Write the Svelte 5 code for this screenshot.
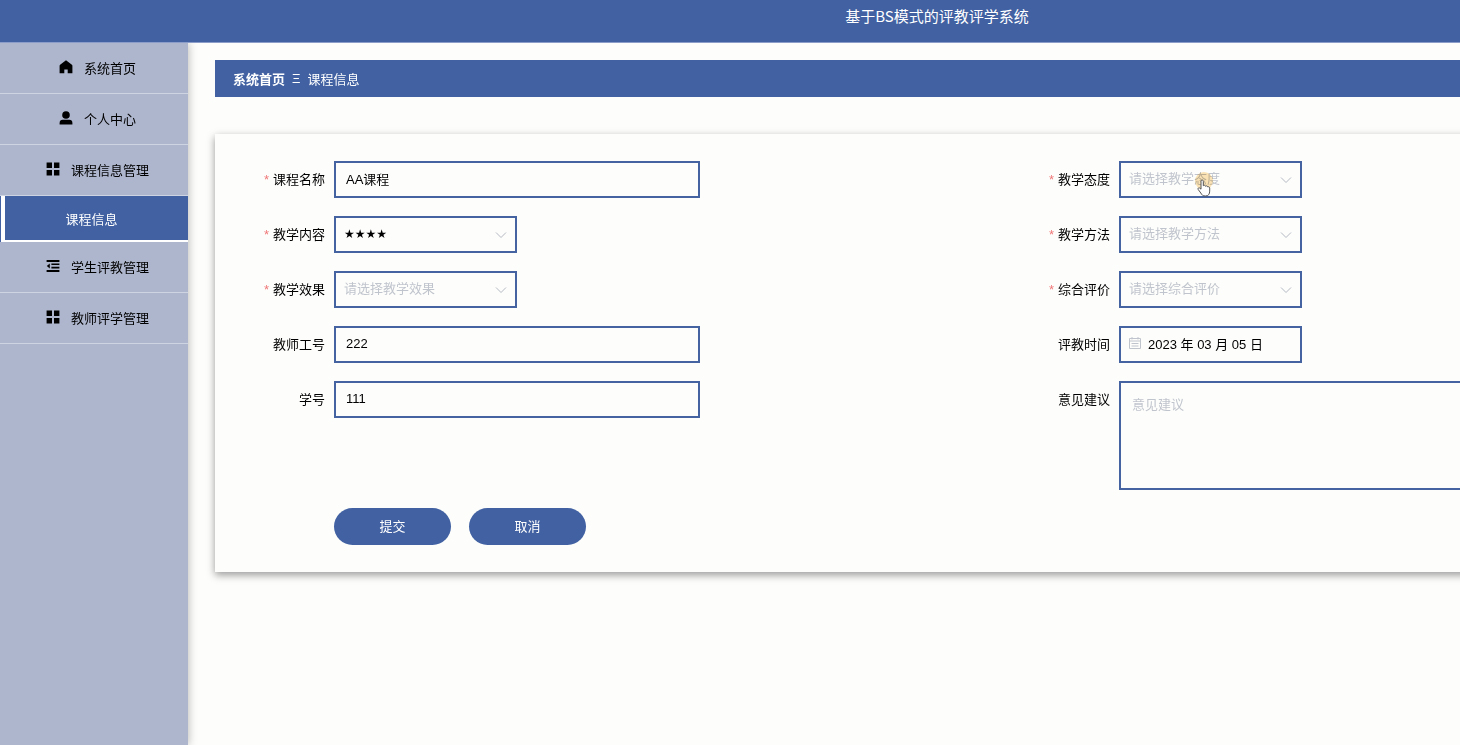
<script>
  const menu = [
    { name: '系统首页', icon: 'home' },
    { name: '个人中心', icon: 'user' },
    { name: '课程信息管理', icon: 'grid', child: '课程信息' },
    { name: '学生评教管理', icon: 'fold' },
    { name: '教师评学管理', icon: 'grid' }
  ]

  const stars = ['★', '★★', '★★★', '★★★★', '★★★★★']

  // left and right column alternate, row by row
  const fields = [
    { id: 'kecheng', label: '课程名称', type: 'text', required: true },
    { id: 'taidu', label: '教学态度', type: 'select', required: true, pointer: true },
    { id: 'neirong', label: '教学内容', type: 'select', required: true },
    { id: 'fangfa', label: '教学方法', type: 'select', required: true },
    { id: 'xiaoguo', label: '教学效果', type: 'select', required: true },
    { id: 'zonghe', label: '综合评价', type: 'select', required: true },
    { id: 'gonghao', label: '教师工号', type: 'text' },
    { id: 'shijian', label: '评教时间', type: 'date' },
    { id: 'xuehao', label: '学号', type: 'text' },
    { id: 'yijian', label: '意见建议', type: 'textarea' }
  ]

  let form = $state({
    kecheng: 'AA课程',
    taidu: '',
    neirong: '★★★★',
    fangfa: '',
    xiaoguo: '',
    zonghe: '',
    gonghao: '222',
    shijian: '2023 年 03 月 05 日',
    xuehao: '111',
    yijian: ''
  })
</script>

<div class="page">
  <header class="navbar">
    <h1>基于BS模式的评教评学系统</h1>
  </header>

  <div class="container">
    <nav class="sidebar">
      <ul>
        {#each menu as item}
          <li>
            <a class="menu-item" href="#/{item.icon}">
              <span class="menu-icon">
                <svg width="14" height="14" viewBox="0 0 14 14" aria-hidden="true">
                  {#if item.icon === 'home'}
                    <path d="M7 .3 12.900 4.700q.5.4.5 1V13.300H8.700V9.600H5.300v3.700H.6V5.700q0-.6.5-1z" />
                  {:else if item.icon === 'user'}
                    <circle cx="7" cy="4" r="3.800" />
                    <path d="M.6 13.400v-1.400c0-2 1.200-3.200 3-3.200h6.800c1.800 0 3 1.200 3 3.200v1.400z" />
                  {:else if item.icon === 'grid'}
                    <path d="M.6.5h5.400v5.400H.6zM8 .5h5.400v5.400H8zM.6 8h5.400v5.400H.6zM8 8h5.400v5.400H8z" />
                  {:else}
                    <path d="M.6 1h12.800v2H.6zM5.400 4.500h8v1.600h-8zM5.400 7.800h8v1.600h-8zM.6 11h12.800v2H.6zM.8 7l3-2.400v4.800z" />
                  {/if}
                </svg>
              </span>
              {item.name}
            </a>
            {#if item.child}
              <div class="submenu">
                <a href="#/kecheng">{item.child}</a>
              </div>
            {/if}
          </li>
        {/each}
      </ul>
    </nav>

    <main>
      <div class="breadcrumb">
        <a href="#/home">系统首页</a>
        <span>Ξ</span>
        <span>课程信息</span>
      </div>

      <form class="card" onsubmit={(e) => e.preventDefault()}>
        <div class="fields">
          {#each fields as f}
            <div class="form-item">
              <label for={f.id}>
                {#if f.required}<span class="star">*</span>{/if}{f.label}
              </label>
              {#if f.type === 'text'}
                <input id={f.id} class="control wide" type="text" bind:value={form[f.id]} />
              {:else if f.type === 'select'}
                <div class="box">
                  <select id={f.id} class="control" class:empty={!form[f.id]} bind:value={form[f.id]}>
                    <option value="">请选择{f.label}</option>
                    {#each stars as s}
                      <option value={s}>{s}</option>
                    {/each}
                  </select>
                  <svg class="arrow" width="12" height="12" viewBox="0 0 12 12" aria-hidden="true">
                    <path d="M1 3.500 6 8.500l5-5" />
                  </svg>
                  {#if f.pointer}
                    <span class="halo"></span>
                    <svg class="hand" width="14" height="18" viewBox="0 0 14 18" aria-hidden="true">
                      <path d="M4 10.200V2.200C4 .5 6.300.5 6.300 2.200v4.600c.5-.9 2.100-.7 2.200.5.6-.8 2-.5 2.200.6.8-.5 2 0 2 1.200v3c0 2.900-1.300 4.900-4.200 4.900-2.700 0-3.600-1-4.700-3L1.200 10.500C.5 9.100 2 8.300 2.900 9.200z" />
                    </svg>
                  {/if}
                </div>
              {:else if f.type === 'date'}
                <div class="box">
                  <input id={f.id} class="control date" type="text" bind:value={form[f.id]} />
                  <svg class="calendar" width="12" height="12" viewBox="0 0 12 12" aria-hidden="true">
                    <path d="M.5 1.500h11v10H.5zM.5 4h11M3 0v2.500M9 0v2.500M2.500 6.500h7M2.500 9h7" />
                  </svg>
                </div>
              {:else}
                <textarea id={f.id} class="control" placeholder={f.label} bind:value={form[f.id]}></textarea>
              {/if}
            </div>
          {/each}
        </div>
        <div class="buttons">
          <button type="submit">提交</button>
          <button type="button">取消</button>
        </div>
      </form>
    </main>
  </div>
</div>

<style>
  :global(body) {
    margin: 0;
    overflow: hidden;
    background: #fdfefc;
  }

  .page {
    width: calc(100vw + 414px);
    font-family: "Liberation Sans", "DejaVu Sans", "Noto Sans CJK SC", sans-serif;
    font-size: 13px;
    color: #000;
  }

  .page * {
    box-sizing: border-box;
  }

  .navbar {
    position: relative;
    z-index: 1;
    height: 43px;
    background: #4161a2;
    border-bottom: 1px solid #8b9dc8;
  }

  .navbar h1 {
    margin: 0;
    text-align: center;
    font-family: "Noto Sans CJK SC", sans-serif;
    font-size: 15px;
    font-weight: 400;
    line-height: 32px;
    color: #fff;
  }

  .container {
    display: flex;
    min-height: calc(100vh - 43px);
  }

  .sidebar {
    flex: none;
    width: 188px;
    background: #aeb6cd;
    box-shadow: 1px 0 8px rgba(0, 0, 0, 0.25);
  }

  .sidebar ul {
    margin: 0;
    padding: 0;
    list-style: none;
  }

  .menu-item {
    display: flex;
    align-items: center;
    justify-content: center;
    height: 51px;
    padding: 0 0 2px 2px;
    border-bottom: 1px solid #ced4e2;
    color: #000;
    text-decoration: none;
  }

  .menu-icon {
    display: flex;
    justify-content: center;
    width: 24px;
    margin-right: 6px;
  }

  .submenu {
    padding-left: 1px;
    background: #4161a2;
  }

  .submenu a {
    display: block;
    height: 46px;
    padding-right: 10px;
    border-left: 4px solid #fff;
    border-bottom: 2px solid #fff;
    line-height: 47px;
    text-align: center;
    color: #fff;
    text-decoration: none;
  }

  main {
    flex: 1;
    padding: 17px 27px;
  }

  .breadcrumb {
    display: flex;
    align-items: center;
    gap: 7px;
    height: 37px;
    padding: 0 18px;
    background: #4161a2;
    color: #fff;
  }

  .breadcrumb a {
    font-weight: 700;
    color: #fff;
    text-decoration: none;
  }

  .card {
    margin-top: 37px;
    padding: 27px 31px;
    background: #fdfefc;
    box-shadow: 0 3px 8px rgba(0, 0, 0, 0.4);
  }

  .fields {
    display: grid;
    grid-template-columns: 1fr 1fr;
    row-gap: 18px;
  }

  .form-item {
    display: flex;
    align-items: flex-start;
  }

  label {
    flex: none;
    width: 88px;
    padding-right: 9px;
    line-height: 37px;
    text-align: right;
    white-space: nowrap;
  }

  .star {
    margin-right: 4px;
    color: #f07878;
  }

  .control {
    width: 183px;
    height: 37px;
    margin: 0;
    padding: 0 10px 2px;
    border: 2px solid #4463a0;
    border-radius: 0;
    outline: none;
    background: transparent;
    font: inherit;
    color: #000;
  }

  .wide {
    width: 366px;
  }

  .box {
    position: relative;
  }

  select.control {
    display: block;
    padding: 0 28px 2px 8px;
    appearance: none;
    font-size: 12px;
  }

  select.empty {
    font-size: 13px;
    color: #c0c4cc;
  }

  .arrow {
    position: absolute;
    right: 10px;
    top: 13px;
    fill: none;
    stroke: #b4b8c2;
    pointer-events: none;
  }

  input.date {
    padding-left: 27px;
  }

  .calendar {
    position: absolute;
    left: 10px;
    top: 11px;
    fill: none;
    stroke: #c0c4cc;
  }

  .halo {
    position: absolute;
    left: 76px;
    top: 11px;
    width: 18px;
    height: 18px;
    border-radius: 50%;
    background: rgba(250, 200, 110, 0.5);
    mix-blend-mode: multiply;
    pointer-events: none;
  }

  .hand {
    position: absolute;
    left: 78px;
    top: 18px;
    fill: #fff;
    stroke: #555;
    pointer-events: none;
  }

  textarea.control {
    flex: 1;
    height: 109px;
    padding: 11px;
    resize: none;
  }

  textarea::placeholder {
    color: #c0c4cc;
  }

  .buttons {
    display: flex;
    gap: 18px;
    margin-top: 18px;
    padding-left: 88px;
  }

  button {
    width: 117px;
    height: 37px;
    padding: 0 0 2px;
    border: none;
    border-radius: 19px;
    background: #4161a2;
    font: inherit;
    color: #fff;
    cursor: pointer;
  }
</style>
